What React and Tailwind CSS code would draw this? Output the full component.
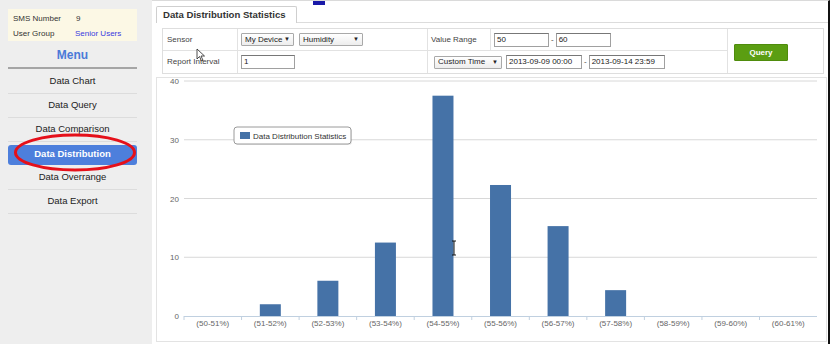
import React from 'react';

const menuItems = ['Data Chart', 'Data Query', 'Data Comparison', 'Data Distribution', 'Data Overrange', 'Data Export'];

const categories = ['(50-51%)', '(51-52%)', '(52-53%)', '(53-54%)', '(54-55%)', '(55-56%)', '(56-57%)', '(57-58%)', '(58-59%)', '(59-60%)', '(60-61%)'];
const values = [0, 2, 6, 12.5, 37.5, 22.3, 15.3, 4.4, 0, 0, 0];

const Select = ({ label, width }) => (
  <div className={`${width} h-[13px] border border-[#a9a9a9] rounded-[1px] bg-gradient-to-b from-white to-[#ededed] flex items-center justify-between px-[3px] text-[8px] text-[#222]`}>
    <span>{label}</span>
    <span className="text-[6px]">▼</span>
  </div>
);

const Input = ({ value, width }) => (
  <div className={`${width} h-[14px] border border-[#a0a0a0] border-t-[#777] bg-white flex items-center px-[2px] text-[8px] text-[#222]`}>
    {value}
  </div>
);

const Sidebar = () => (
  <div className="relative w-[152px] shrink-0 bg-[#eeeeee] pt-[9px] pl-[8px]">
    <div className="w-[129px] h-[32px] bg-[#fcf8e5] text-[8px] text-[#333] pl-[5px] pt-[4px] flex flex-col gap-[3px]">
      <div className="flex"><span className="w-[63px]">SMS Number</span><span>9</span></div>
      <div className="flex"><span className="w-[62px]">User Group</span><span className="text-[#3a3ae0]">Senior Users</span></div>
    </div>
    <div className="w-[129px] h-[28px] pt-[2px] flex items-center justify-center text-[12px] font-bold text-[#4b7ad8] border-b-2 border-[#a5a5a5]">
      Menu
    </div>
    <div className="w-[129px] pt-[1px] flex flex-col">
      {menuItems.map((item) =>
        item === 'Data Distribution' ? (
          <div key={item} className="h-[24px] flex items-center">
            <div className="w-full h-[20px] mt-[1px] rounded-[3px] bg-[#4d7fdc] text-white font-bold text-[9.5px] flex items-center justify-center">
              {item}
            </div>
          </div>
        ) : (
          <div key={item} className="h-[24px] flex items-center justify-center text-[9.5px] text-[#222] border-b border-[#dcdcdc]">
            {item}
          </div>
        )
      )}
    </div>
    <svg className="absolute left-0 top-0 pointer-events-none" width="152" height="200">
      <ellipse cx="75" cy="152.5" rx="59.5" ry="17.5" fill="none" stroke="#e5101a" strokeWidth="3" />
    </svg>
  </div>
);

const FormTable = () => (
  <div className="ml-[6px] mt-[5px] w-[662px] grid grid-cols-[75px_190px_63px_237px_97px] grid-rows-[22px_22px] border border-[#dedede] text-[8px] text-[#444]">
    <div className="border-r border-b border-[#e2e2e2] flex items-center pl-[4px]">Sensor</div>
    <div className="border-r border-b border-[#e2e2e2] flex items-center pl-[3px] gap-[5px]">
      <Select label="My Device" width="w-[53px]" />
      <Select label="Humidity" width="w-[64px]" />
    </div>
    <div className="border-r border-b border-[#e2e2e2] flex items-center pl-[3px]">Value Range</div>
    <div className="border-r border-b border-[#e2e2e2] flex items-center pl-[3px]">
      <Input value="50" width="w-[55px]" />
      <span className="mx-[2px]">-</span>
      <Input value="60" width="w-[55px]" />
    </div>
    <div className="row-span-2 flex items-center pl-[6px] pt-[3px]">
      <div className="w-[54px] h-[17px] bg-[#5b9e12] border border-[#4f8c0c] rounded-[1px] text-white font-bold text-[8px] flex items-center justify-center">
        Query
      </div>
    </div>
    <div className="border-r border-[#e2e2e2] flex items-center pl-[4px] relative">
      Report Interval
      <svg className="absolute left-[33px] top-[-3px]" width="10" height="14" viewBox="0 0 10 14">
        <path d="M1 1 L1 11 L3.5 8.5 L5.5 13 L7 12.3 L5 8 L8.5 8 Z" fill="white" stroke="#222" strokeWidth="0.8" />
      </svg>
    </div>
    <div className="border-r border-[#e2e2e2] flex items-center pl-[3px]">
      <Input value="1" width="w-[54px]" />
    </div>
    <div className="col-span-2 border-r border-[#e2e2e2] flex items-center pl-[6px]">
      <Select label="Custom Time" width="w-[68px]" />
      <span className="w-[4px]" />
      <Input value="2013-09-09 00:00" width="w-[76px]" />
      <span className="mx-[2px]">-</span>
      <Input value="2013-09-14 23:59" width="w-[76px]" />
    </div>
  </div>
);

const Chart = () => {
  const x0 = 27;
  const step = 57.55;
  const unit = 5.875;
  const base = 238;
  return (
    <div className="mt-[3px] w-[671px] h-[265px] border border-[#e3e3e3] bg-white">
      <svg width="669" height="263" className="block" style={{ fontFamily: 'Liberation Sans, Arial, sans-serif' }}>
        {[40, 30, 20, 10].map((v) => (
          <line key={v} x1={x0} x2="660" y1={base - v * unit} y2={base - v * unit} stroke="#d8d8d8" strokeWidth="1" />
        ))}
        {[40, 30, 20, 10, 0].map((v) => (
          <text key={v} x="22" y={base - v * unit + 3} textAnchor="end" fontSize="8" fill="#666">{v}</text>
        ))}
        <line x1={x0} x2="660" y1={base + 0.5} y2={base + 0.5} stroke="#c0d0e0" strokeWidth="1" />
        {categories.map((c, i) => (
          <line key={'t' + i} x1={x0 + step * i} x2={x0 + step * i} y1={base} y2={base + 4} stroke="#c0d0e0" />
        ))}
        {values.map((v, i) =>
          v > 0 ? (
            <rect key={'b' + i} x={x0 + step * (i + 0.5) - 10.5} y={base - v * unit} width="21" height={v * unit} fill="#4572a7" />
          ) : null
        )}
        {categories.map((c, i) => (
          <text key={'c' + i} x={x0 + step * (i + 0.5)} y="248" textAnchor="middle" fontSize="8" fill="#666">{c}</text>
        ))}
        <rect x="78" y="50" width="117" height="17" rx="3" fill="#000" opacity="0.08" />
        <rect x="77" y="49" width="117" height="17" rx="3" fill="white" stroke="#9a9a9a" strokeWidth="1" />
        <rect x="83" y="54" width="10" height="7" fill="#4572a7" />
        <text x="96" y="61" fontSize="8" fill="#333">Data Distribution Statistics</text>
        <line x1="297" x2="297" y1="163" y2="177" stroke="#111" strokeWidth="1" />
        <line x1="295" x2="299" y1="163" y2="163" stroke="#111" />
        <line x1="295" x2="299" y1="177" y2="177" stroke="#111" />
      </svg>
    </div>
  );
};

export default function App() {
  return (
    <div className="w-[832px] h-[344px] flex overflow-hidden bg-white font-['Liberation_Sans',Arial,sans-serif]">
      <Sidebar />
      <div className="relative w-[678px] h-full border-t border-[#dadada] border-r-2 border-r-[#111] pl-[4px]">
        <div className="absolute left-[161px] top-0 w-[12px] h-[4px] bg-[#1a1aa8]" />
        <div className="flex h-[22px] items-end border-b border-[#dcdcdc]">
          <div className="h-[17px] w-[141px] -mb-px bg-white border border-b-0 border-[#cfcfcf] rounded-t-[2px] flex items-center pl-[6px] text-[9.6px] font-bold text-[#333]">
            Data Distribution Statistics
          </div>
        </div>
        <FormTable />
        <Chart />
      </div>
    </div>
  );
}
